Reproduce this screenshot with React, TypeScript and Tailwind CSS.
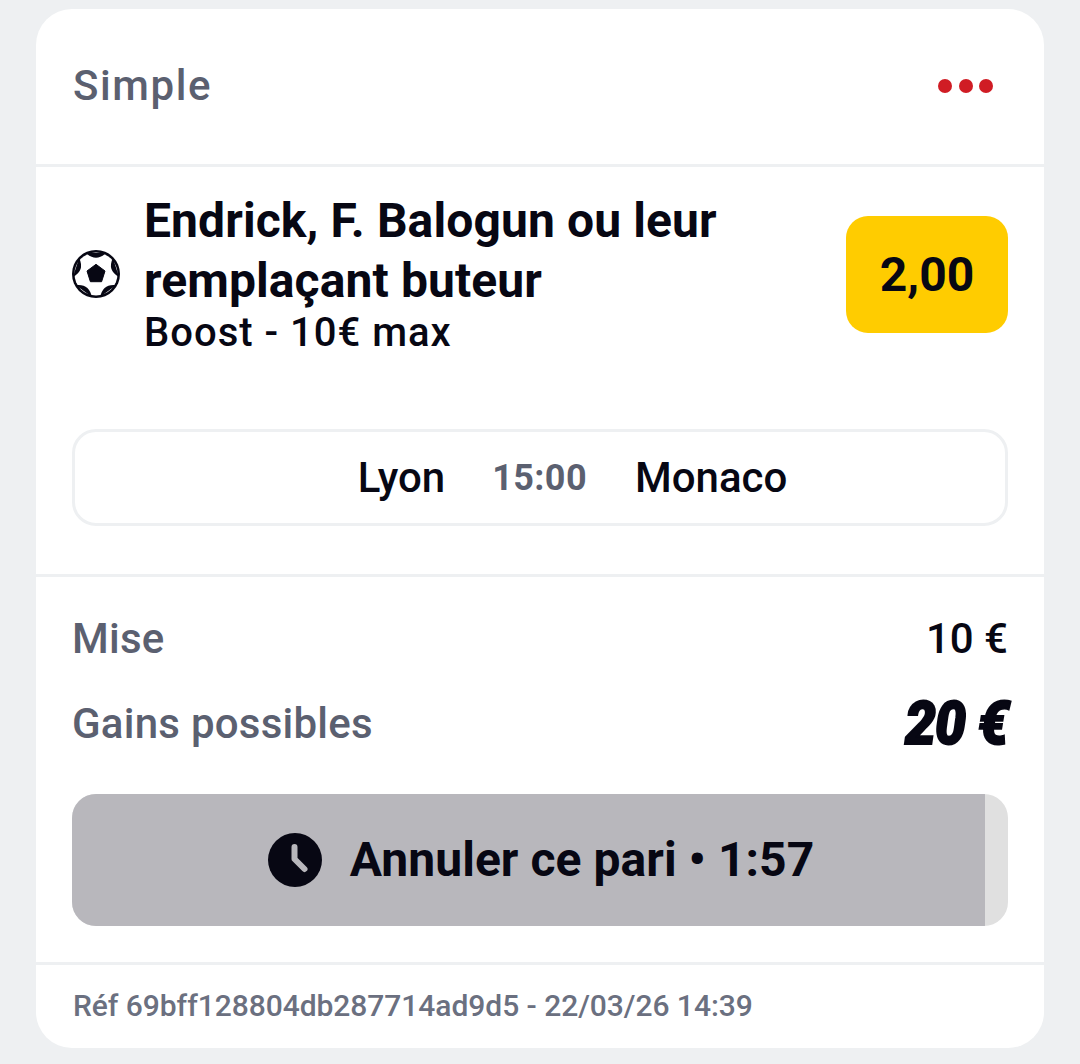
export default function App() {
  return (
    <div className="h-[1064px] w-[1080px] overflow-hidden bg-[#eef0f2] px-[36px] pt-[9px] font-['Roboto',sans-serif] text-[#070713]">
      <div className="flex h-[1039px] w-[1008px] flex-col rounded-[36px] bg-white">
        <div className="flex h-[158px] shrink-0 items-center justify-between border-b-[3px] border-[#eef0f2] pl-[37px] pr-[51px] pb-[2px]">
          <span className="text-[42px] font-medium leading-none tracking-[1.6px] text-[#5b6070]">Simple</span>
          <div className="flex gap-[6.5px] pt-[1px]">
            <span className="h-[14px] w-[14px] rounded-full bg-[#d01c24]" />
            <span className="h-[14px] w-[14px] rounded-full bg-[#d01c24]" />
            <span className="h-[14px] w-[14px] rounded-full bg-[#d01c24]" />
          </div>
        </div>
        <div className="flex h-[410px] shrink-0 flex-col border-b-[3px] border-[#eef0f2] px-[36px]">
          <div className="flex items-center justify-between pt-[24px]">
            <div className="flex items-center">
              <svg width="48" height="48" viewBox="0 0 48 48" className="mr-[24px] mt-[2px] shrink-0">
                <circle cx="24" cy="24" r="24" fill="#070713" />
                <circle cx="24" cy="24" r="21.500" fill="#fff" />
                <path d="M14 3 Q24 12.500 34 3 Z" fill="#070713" />
                <path d="M14 3 Q24 12.500 34 3 Z" fill="#070713" transform="rotate(72 24 24)" />
                <path d="M14 3 Q24 12.500 34 3 Z" fill="#070713" transform="rotate(144 24 24)" />
                <path d="M14 3 Q24 12.500 34 3 Z" fill="#070713" transform="rotate(216 24 24)" />
                <path d="M14 3 Q24 12.500 34 3 Z" fill="#070713" transform="rotate(288 24 24)" />
                <path d="M24 14.300 L33 21 L29.600 31.700 L18.400 31.700 L15 21 Z" fill="#070713" stroke="#070713" strokeWidth="1" strokeLinejoin="round" />
              </svg>
              <div className="flex flex-col">
                <span className="w-[640px] text-[48px] font-bold leading-[60px] tracking-[0.1px]">Endrick, F. Balogun ou leur remplaçant buteur</span>
                <span className="text-[40px] font-medium leading-[44px] tracking-[1px]">Boost - 10€ max</span>
              </div>
            </div>
            <div className="mt-[3px] flex h-[117px] w-[162px] shrink-0 items-center justify-center rounded-[22px] bg-[#ffcc00] text-[48px] font-bold leading-none">2,00</div>
          </div>
          <div className="mt-[74px] flex h-[97px] items-center justify-center rounded-[24px] border-[3px] border-[#eef0f2] pl-[65px] text-[42px] font-medium">
            <span className="leading-none">Lyon</span>
            <span className="ml-[47px] mr-[48px] text-[36px] font-bold leading-none tracking-[0.4px] text-[#5b6070]">15:00</span>
            <span className="leading-none">Monaco</span>
          </div>
        </div>
        <div className="flex h-[388px] shrink-0 flex-col border-b-[3px] border-[#eef0f2] px-[36px]">
          <div className="mt-[41px] flex h-[42px] items-center justify-between">
            <span className="text-[42px] font-medium leading-none tracking-[0.25px] text-[#5b6070]">Mise</span>
            <span className="text-[42px] font-medium leading-none">10 €</span>
          </div>
          <div className="mt-[34px] flex h-[60px] items-center justify-between">
            <span className="text-[42px] font-medium leading-none tracking-[0.25px] text-[#5b6070]">Gains possibles</span>
            <span className="origin-right scale-x-[0.92] text-[60px] font-black italic leading-none tracking-[-1px] [-webkit-text-stroke:2px_#070713]">20 €</span>
          </div>
          <div className="relative mt-[40px] flex h-[132px] items-center justify-center overflow-hidden rounded-[24px] bg-[#e0e0e0]">
            <div className="absolute inset-y-0 left-0 w-[913px] bg-[#b8b7bc]" />
            <div className="relative flex items-center pl-[2px]">
              <svg width="54" height="54" viewBox="0 0 54 54" className="mr-[28px]">
                <circle cx="27" cy="27" r="27" fill="#070713" />
                <path d="M26.500 14 V26 L36.500 36" fill="none" stroke="#b8b7bc" strokeWidth="6" strokeLinecap="round" strokeLinejoin="round" />
              </svg>
              <span className="text-[48px] font-bold leading-none tracking-[0.05px]">Annuler ce pari • 1:57</span>
            </div>
          </div>
        </div>
        <div className="flex flex-1 items-center px-[37px] pb-[1px]">
          <span className="text-[30px] font-medium leading-none tracking-[-0.05px] text-[#6b7080]">Réf 69bff128804db287714ad9d5 - 22/03/26 14:39</span>
        </div>
      </div>
    </div>
  );
}
